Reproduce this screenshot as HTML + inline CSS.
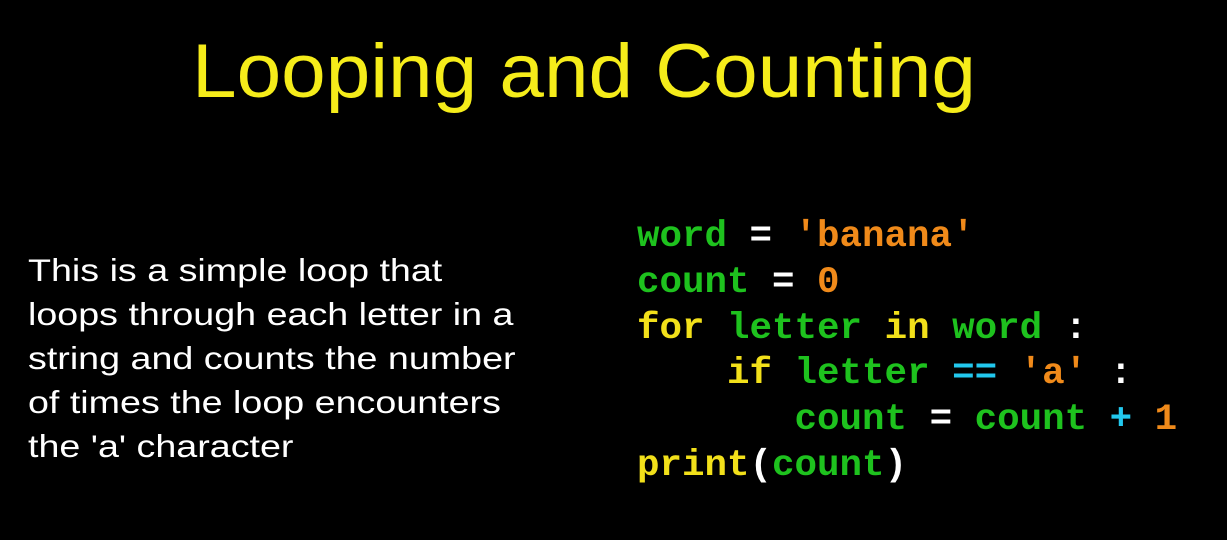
<!DOCTYPE html>
<html><head><style>
body{margin:0;width:1227px;height:540px;background:#000;overflow:hidden;position:relative}
.t{position:absolute;left:0;width:1168px;top:27px;text-align:center;font-family:"Liberation Sans",sans-serif;font-size:76px;color:#f5ec1a;line-height:90px;transform:scaleX(1.054);transform-origin:584px 0}
.l{position:absolute;left:28px;top:248px;font-family:"Liberation Sans",sans-serif;font-size:31.5px;line-height:44px;color:#fff;white-space:nowrap;transform:scaleX(1.195);transform-origin:0 0}
.c{position:absolute;left:637px;top:215px;font-family:"Liberation Mono",monospace;font-weight:bold;font-size:37.5px;line-height:45.8px;white-space:pre;color:#fff}
.g{color:#1ec21e}.y{color:#f2e01a}.o{color:#f08a1a}.b{color:#22c8ee}
</style></head><body>
<div class="t">Looping and Counting</div>
<div class="l">This is a simple loop that<br>loops through each letter in a<br>string and counts the number<br>of times the loop encounters<br>the 'a' character</div>
<div class="c"><span class="g">word</span> = <span class="o">'banana'</span>
<span class="g">count</span> = <span class="o">0</span>
<span class="y">for</span> <span class="g">letter</span> <span class="y">in</span> <span class="g">word</span> :
    <span class="y">if</span> <span class="g">letter</span> <span class="b">==</span> <span class="o">'a'</span> :
       <span class="g">count</span> = <span class="g">count</span> <span class="b">+</span> <span class="o">1</span>
<span class="y">print</span>(<span class="g">count</span>)</div>
</body></html>
